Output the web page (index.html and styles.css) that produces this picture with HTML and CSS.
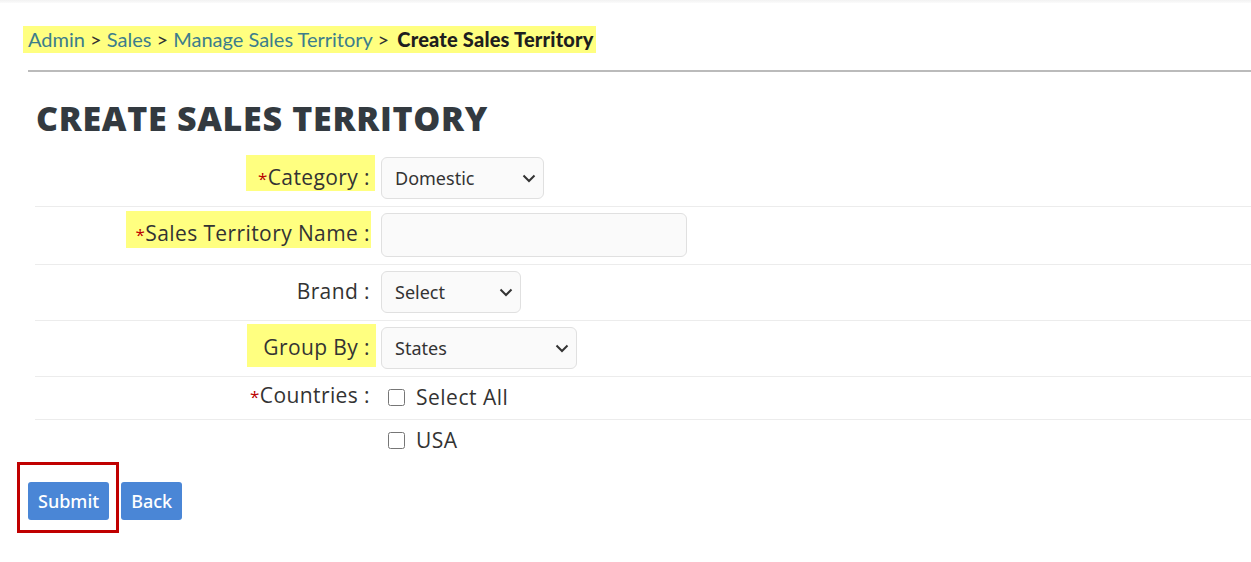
FILE: index.html
```html
<!DOCTYPE html>
<html>
  <head>
    <title>Create Sales Territory</title>
    <meta charset="UTF-8" />
    <link rel="stylesheet" href="styles.css">
  </head>
  <body>
    <div class="topbar"></div>
    <div class="page">
      <div class="crumbs">
        <span class="hl-crumb"><a href="#">Admin</a> &gt; <a href="#">Sales</a> &gt; <a href="#">Manage Sales Territory</a> &gt; <b>Create Sales Territory</b></span>
      </div>
      <hr class="rule">

      <h1>CREATE SALES TERRITORY</h1>

      <div class="form">
        <div class="row">
          <div class="label"><span class="hl"><i>*</i>Category :</span></div>
          <div class="field">
            <select class="sel sel-cat">
              <option>Domestic</option>
            </select>
          </div>
        </div>
        <div class="row">
          <div class="label"><span class="hl hl-name"><i>*</i>Sales Territory Name :</span></div>
          <div class="field">
            <input type="text" class="txt">
          </div>
        </div>
        <div class="row">
          <div class="label">Brand :</div>
          <div class="field">
            <select class="sel sel-brand">
              <option>Select</option>
            </select>
          </div>
        </div>
        <div class="row">
          <div class="label"><span class="hl hl-group">Group By :</span></div>
          <div class="field">
            <select class="sel sel-group">
              <option>States</option>
            </select>
          </div>
        </div>
        <div class="row row-check">
          <div class="label"><i>*</i>Countries :</div>
          <div class="field">
            <label class="check"><input type="checkbox"> Select All</label>
          </div>
        </div>
        <div class="row row-check last">
          <div class="label"></div>
          <div class="field">
            <label class="check"><input type="checkbox"> USA</label>
          </div>
        </div>
      </div>

      <div class="actions">
        <span class="mark"><button class="btn">Submit</button></span>
        <button class="btn">Back</button>
      </div>
    </div>
  </body>
</html>
```

FILE: styles.css
```css
*{
    margin: 0;
    padding: 0;
    box-sizing: border-box;
}
body{
    background: #fff;
    font-family: "Open Sans", sans-serif;
    color: #333;
}
.topbar{
    height: 3px;
    background: linear-gradient(#f2f2f2, #fbfbfb);
}
.page{
    padding-left: 28px;
}

/* breadcrumb */
.crumbs{
    padding-top: 23px;
    font-family: Lato, sans-serif;
    font-size: 20px;
    line-height: 27px;
    color: #333;
}
.hl-crumb{
    display: inline-block;
    background: #ffff80;
    margin-left: -5px;
    padding: 0 2px 0 5px;
}
.crumbs a{
    color: #3c7d8c;
    text-decoration: none;
}
.crumbs b{
    color: #1e1e1e;
    font-weight: 900;
    letter-spacing: 0.2px;
    margin-left: 3px;
}
.rule{
    border: 0;
    height: 2px;
    background: #bbb;
    margin-top: 17px;
}

h1{
    font-family: "Open Sans", sans-serif;
    font-weight: 800;
    font-size: 34px;
    line-height: 40px;
    color: #333a40;
    margin: 26px 0 13px 8px;
    letter-spacing: 0.7px;
}

/* form rows */
.form{
    margin-left: 7px;
}
.row{
    display: grid;
    grid-template-columns: 335px 1fr;
    column-gap: 11px;
    padding: 6px 0 7px;
    border-bottom: 1px solid #ececec;
}
.row.last{
    border-bottom: 0;
}
.label{
    text-align: right;
    font-size: 21px;
    line-height: 28px;
    letter-spacing: 0.4px;
    padding-top: 6px;
    color: #333;
}
.label i{
    font-style: normal;
    color: #b00;
    font-size: 17px;
}
.hl{
    background: #ffff80;
    padding: 8px 5px 0 12px;
    margin-right: -5px;
}
.hl-name{
    padding: 8px 1px 1px 10px;
    margin-right: -1px;
}
.hl-group{
    padding: 9px 6px 6px 16px;
    margin-right: -6px;
}
.field{
    display: flex;
    align-items: flex-start;
}
.sel{
    appearance: none;
    -webkit-appearance: none;
    height: 42px;
    font-family: "Noto Sans", sans-serif;
    font-size: 18px;
    color: #333;
    background-color: #fafafa;
    background-image: url("data:image/svg+xml,%3Csvg xmlns='http://www.w3.org/2000/svg' width='14' height='9' viewBox='0 0 14 9'%3E%3Cpath d='M1.5 1.5l5.5 5.5 5.5-5.5' fill='none' stroke='%23333' stroke-width='2'/%3E%3C/svg%3E");
    background-repeat: no-repeat;
    background-position: right 7px center;
    border: 1px solid #e0e0e0;
    border-radius: 6px;
    padding: 0 24px 0 13px;
}
.sel-cat{ width: 163px; }
.sel-brand{ width: 140px; }
.sel-group{ width: 196px; }
.txt{
    width: 306px;
    height: 44px;
    background: #fafafa;
    border: 1px solid #e0e0e0;
    border-radius: 6px;
}
.row-check{
    padding: 1px 0 5px;
}
.row-check .label{
    padding-top: 3px;
}
.check{
    display: inline-flex;
    align-items: center;
    gap: 11px;
    font-size: 21px;
    letter-spacing: 0.5px;
    line-height: 33px;
    padding-top: 3px;
    padding-left: 7px;
    color: #333;
}
.check input{
    width: 17px;
    height: 17px;
    margin: 0;
}

/* buttons */
.actions{
    margin-left: -11px;
    display: flex;
    align-items: flex-start;
    gap: 2px;
}
.mark{
    display: inline-block;
    border: 3px solid #c00000;
    padding: 17px 7px 10px 8px;
}
.btn{
    height: 38px;
    padding: 0 10px;
    font-family: "Noto Sans", sans-serif;
    font-weight: 500;
    font-size: 18px;
    color: #fff;
    background: #4a86d6;
    border: 0;
    border-radius: 3px;
}
.actions > .btn{
    margin-top: 20px;
}
```
